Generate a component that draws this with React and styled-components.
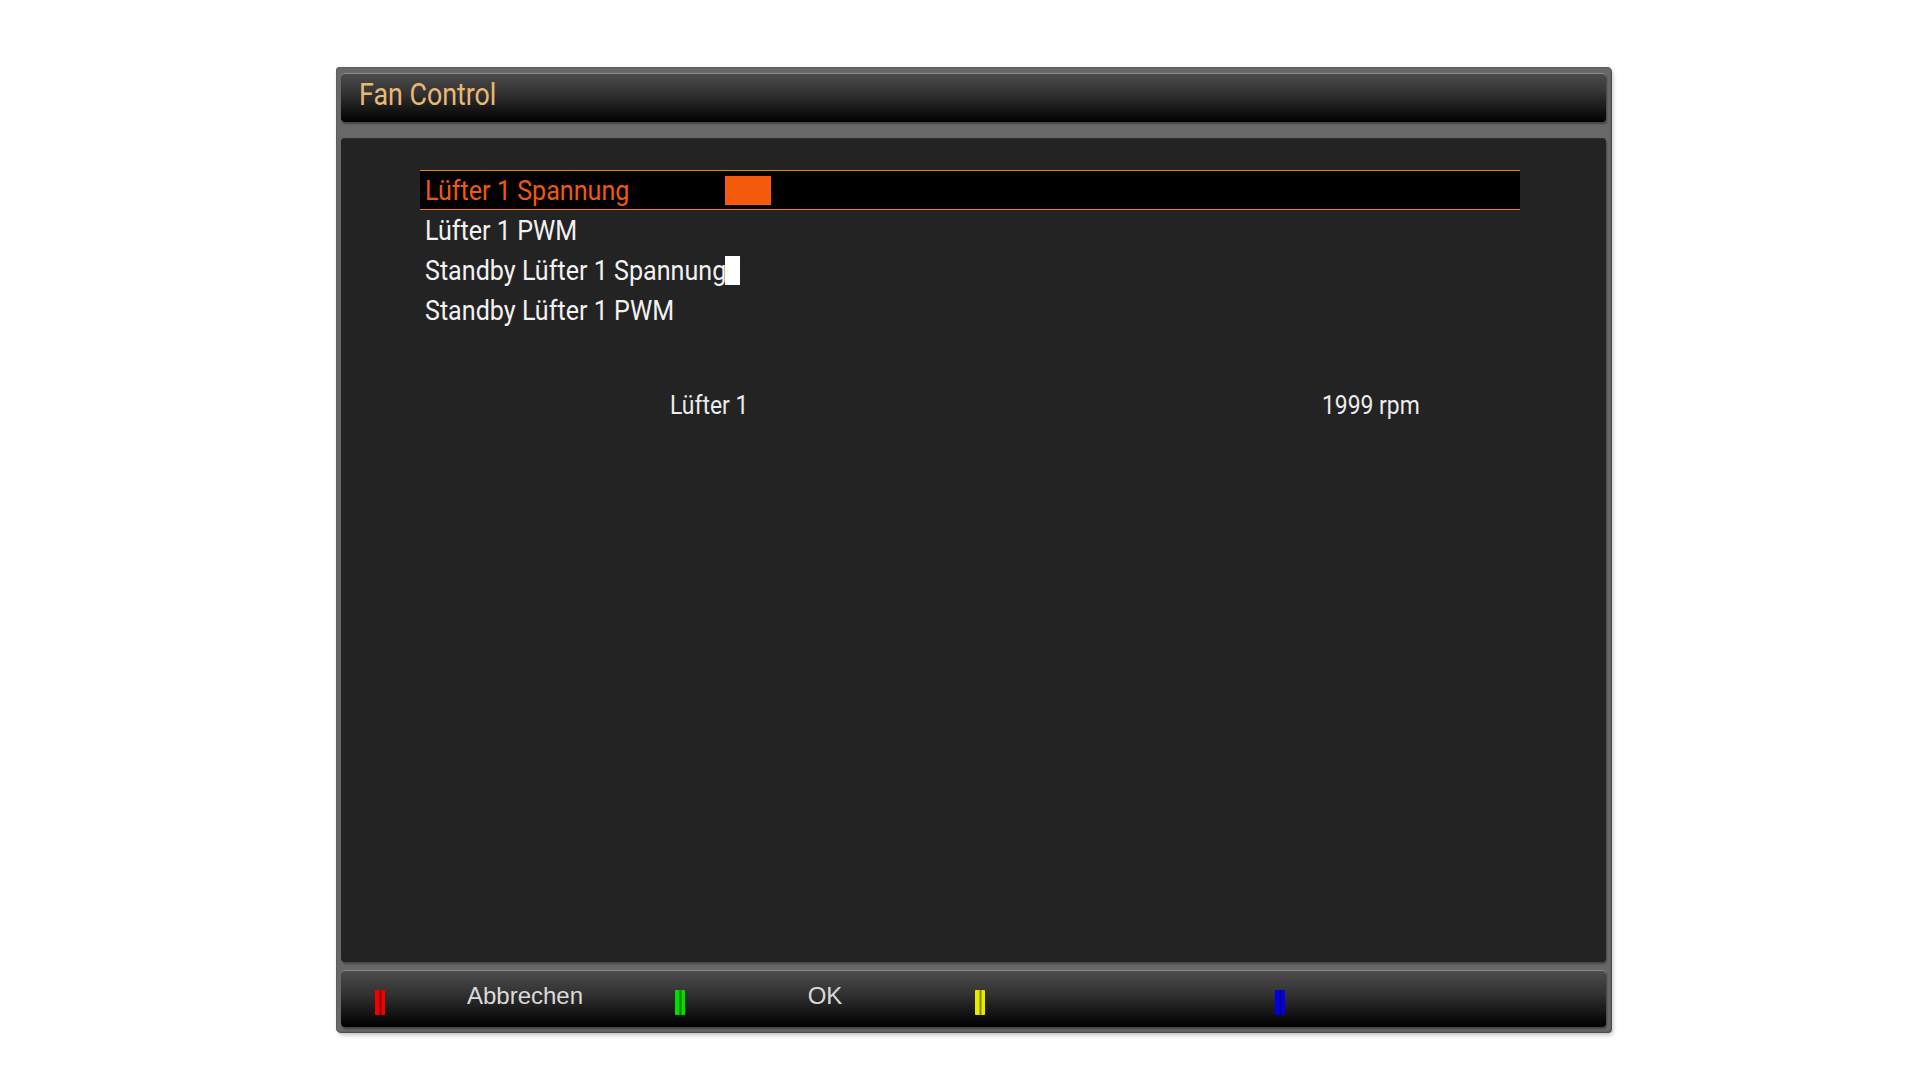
import styled, { createGlobalStyle } from 'styled-components'

const GlobalStyle = createGlobalStyle`
  html, body {
    margin: 0;
    padding: 0;
    background: #ffffff;
  }
  body {
    font-family: Roboto, "Liberation Sans", sans-serif;
  }
`

const Page = styled.div`
  display: flex;
  align-items: flex-start;
  padding: 67px 0 0 336px;
  width: 1920px;
  height: 1080px;
  box-sizing: border-box;
`

const Frame = styled.div`
  display: flex;
  flex-direction: column;
  width: 1275px;
  height: 965px;
  box-sizing: border-box;
  padding: 6px 5px 5px 5px;
  background: #686868;
  border-radius: 4px;
  box-shadow: 1px 1px 0 #4c4c4c, 2px 3px 4px rgba(0, 0, 0, 0.25),
    inset 0 0 0 1px #5e5e5e;
`

const BarBase = styled.div`
  display: flex;
  border-radius: 4px;
  background: linear-gradient(180deg, #4d4d4d 0%, #333 40%, #111 80%, #000 100%);
  box-shadow: inset 0 1px 0 #8a8a8a, 1px 2px 2px rgba(0, 0, 0, 0.35);
`

const TitleBar = styled(BarBase)`
  height: 49px;
  flex: none;
  padding-left: 18px;
  margin-bottom: 16px;
`

const Condensed = styled.span`
  display: inline-block;
  white-space: nowrap;
  transform: scaleX(${(p) => p.$scale});
  transform-origin: left center;
`

const Title = styled.div`
  font-family: Roboto, sans-serif;
  font-size: 31px;
  line-height: 43px;
  color: #ebb874;
`

const Content = styled.div`
  flex: 1;
  display: flex;
  flex-direction: column;
  background: #232323;
  border-radius: 4px;
  padding: 32px 0 0 79px;
  box-shadow: inset 0 1px 0 #2e2e2e, 1px 2px 2px rgba(0, 0, 0, 0.3);
`

const Menu = styled.div`
  display: flex;
  flex-direction: column;
  width: 1100px;
`

const Row = styled.div`
  display: grid;
  grid-template-columns: 305px 1fr;
  align-items: center;
  height: 40px;
  box-sizing: border-box;
  border-top: 1px solid ${(p) => (p.$selected ? '#f07f10' : 'transparent')};
  border-bottom: 1px solid ${(p) => (p.$selected ? '#f07f10' : 'transparent')};
  background: ${(p) => (p.$selected ? '#000' : 'transparent')};
`

const Label = styled.div`
  padding: 2px 0 0 5px;
  font-family: Roboto, sans-serif;
  font-size: 27px;
  line-height: 36px;
  color: ${(p) => (p.$selected ? '#f05a0c' : '#f2f2f2')};
`

const ValueBox = styled.div`
  width: ${(p) => p.$width}px;
  height: 29px;
  background: ${(p) => p.$color};
`

const Status = styled.div`
  display: grid;
  grid-template-columns: 652px auto;
  margin-top: 55px;
  padding-left: 250px;
  font-family: Roboto, sans-serif;
  font-size: 26px;
  line-height: 40px;
  color: #ececec;
`

const Footer = styled(BarBase)`
  height: 57px;
  flex: none;
  margin-top: 8px;
  padding-left: 34px;
`

const Slot = styled.div`
  display: grid;
  grid-template-columns: 10px 1fr 10px;
  align-items: start;
  width: 300px;
`

const Marker = styled.div`
  margin-top: 20px;
  width: 10px;
  height: 25px;
  border-radius: 1px;
  background: linear-gradient(
    90deg,
    ${(p) => p.$c} 0%,
    ${(p) => p.$c} 35%,
    ${(p) => p.$d} 55%,
    ${(p) => p.$c} 75%,
    ${(p) => p.$c} 100%
  );
`

const KeyLabel = styled.div`
  margin-top: 12px;
  text-align: center;
  font-family: "Liberation Sans", Arial, sans-serif;
  font-size: 24px;
  line-height: 28px;
  color: #dadada;
`

const rows = [
  { label: 'Lüfter 1 Spannung', selected: true, value: { width: 46, color: '#f45a0c' } },
  { label: 'Lüfter 1 PWM' },
  { label: 'Standby Lüfter 1 Spannung', value: { width: 15, color: '#ffffff' } },
  { label: 'Standby Lüfter 1 PWM' },
]

const keys = [
  { c: '#f00000', d: '#8a0000', label: 'Abbrechen' },
  { c: '#00e000', d: '#007a00', label: 'OK' },
  { c: '#e8e800', d: '#8a8a00', label: '' },
  { c: '#0000e8', d: '#00007a', label: '' },
]

export default function App() {
  return (
    <>
      <GlobalStyle />
      <Page>
        <Frame>
          <TitleBar>
            <Title>
              <Condensed $scale={0.865}>Fan Control</Condensed>
            </Title>
          </TitleBar>
          <Content>
            <Menu>
              {rows.map((r) => (
                <Row key={r.label} $selected={r.selected}>
                  <Label $selected={r.selected}>
                    <Condensed $scale={0.93}>{r.label}</Condensed>
                  </Label>
                  <div>
                    {r.value && <ValueBox $width={r.value.width} $color={r.value.color} />}
                  </div>
                </Row>
              ))}
            </Menu>
            <Status>
              <Condensed $scale={0.88}>Lüfter 1</Condensed>
              <Condensed $scale={0.88}>1999 rpm</Condensed>
            </Status>
          </Content>
          <Footer>
            {keys.map((k, i) => (
              <Slot key={i}>
                <Marker $c={k.c} $d={k.d} />
                <KeyLabel>{k.label}</KeyLabel>
              </Slot>
            ))}
          </Footer>
        </Frame>
      </Page>
    </>
  )
}
